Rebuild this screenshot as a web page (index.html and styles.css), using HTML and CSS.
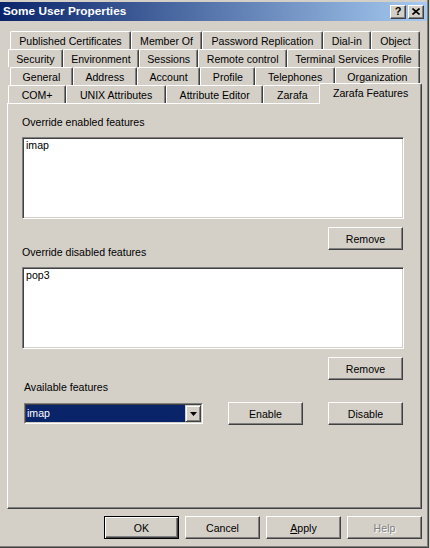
FILE: index.html
```html
<!DOCTYPE html>
<html>
<head>
<meta charset="utf-8">
<link rel="stylesheet" href="styles.css">
</head>
<body>
<div class="window">
  <div class="caption">
    <span class="title">Some User Properties</span>
    <div class="capbtns">
      <span class="capbtn help">?</span>
      <span class="capbtn close"><svg width="8" height="7" viewBox="0 0 8 7"><path d="M0.5 0.5 L7.5 6.5 M7.5 0.5 L0.5 6.5" stroke="#000" stroke-width="1.6" fill="none"/></svg></span>
    </div>
  </div>
  <div class="client">
    <div class="tabs">
      <div class="tabrow indent">
        <div class="tab">Published Certificates</div>
        <div class="tab">Member Of</div>
        <div class="tab">Password Replication</div>
        <div class="tab">Dial-in</div>
        <div class="tab">Object</div>
      </div>
      <div class="tabrow">
        <div class="tab">Security</div>
        <div class="tab">Environment</div>
        <div class="tab">Sessions</div>
        <div class="tab">Remote control</div>
        <div class="tab">Terminal Services Profile</div>
      </div>
      <div class="tabrow indent">
        <div class="tab">General</div>
        <div class="tab">Address</div>
        <div class="tab">Account</div>
        <div class="tab">Profile</div>
        <div class="tab">Telephones</div>
        <div class="tab">Organization</div>
      </div>
      <div class="tabrow">
        <div class="tab">COM+</div>
        <div class="tab">UNIX Attributes</div>
        <div class="tab">Attribute Editor</div>
        <div class="tab">Zarafa</div>
        <div class="tab sel">Zarafa Features</div>
      </div>
    </div>
    <div class="panel">
      <div class="lbl">Override enabled features</div>
      <div class="listbox"><div class="item">imap</div></div>
      <div class="btnrow"><div class="btn">Remove</div></div>
      <div class="lbl lbl-up">Override disabled features</div>
      <div class="listbox"><div class="item">pop3</div></div>
      <div class="btnrow"><div class="btn">Remove</div></div>
      <div class="lbl lbl-avail">Available features</div>
      <div class="comborow">
        <div class="combo">
          <div class="combo-inner">
            <div class="combo-sel">imap</div>
            <div class="combo-drop"><svg width="7" height="4" viewBox="0 0 7 4"><polygon points="0,0 7,0 3.5,4" fill="#000"/></svg></div>
          </div>
        </div>
        <div class="btn">Enable</div>
        <div class="btn btn-gap">Disable</div>
      </div>
    </div>
    <div class="dlgbtns">
      <div class="btn default">OK</div>
      <div class="btn">Cancel</div>
      <div class="btn"><span><u>A</u>pply</span></div>
      <div class="btn disabled">Help</div>
    </div>
  </div>
</div>
</body>
</html>
```
FILE: styles.css
```css
* { box-sizing: border-box; }
html, body { margin: 0; padding: 0; }
body {
  width: 430px;
  height: 548px;
  overflow: hidden;
  background: #d4d0c8;
  font-family: "Liberation Sans", Arial, sans-serif;
  font-size: 10.6px;
  color: #000;
}
.window {
  width: 429px;
  height: 548px;
  background: #d4d0c8;
  border-right: 1px solid #404040;
  border-bottom: 1px solid #404040;
  box-shadow: inset -1px -1px #808080;
  padding-top: 2px;
}
.caption {
  height: 19px;
  margin-right: 1px;
  padding: 0 3px 0 3px;
  display: flex;
  align-items: center;
  justify-content: space-between;
  background: linear-gradient(to right, #0a246a, #a6caf0);
  color: #fff;
  font-weight: bold;
}
.title { line-height: 13px; font-size: 11.8px; }
.capbtns { display: flex; gap: 2px; }
.capbtn {
  width: 16px;
  height: 14px;
  background: #d4d0c8;
  border: 1px solid;
  border-color: #fff #404040 #404040 #fff;
  box-shadow: inset -1px -1px #808080;
  display: flex;
  align-items: center;
  justify-content: center;
  color: #000;
  font-weight: bold;
  font-size: 11px;
  line-height: 11px;
}
.client { padding-left: 7px; }
.tabs { margin-top: 10px; width: 415px; }
.tabrow {
  display: flex;
  height: 18px;
  margin: 0 2px 0 1px;
}
.tabrow.indent { margin-left: 3px; }
.tab {
  flex: 1 1 auto;
  display: flex;
  align-items: center;
  justify-content: center;
  white-space: nowrap;
  padding: 0 4px;
  height: 18px;
  border-top: 1px solid #fff;
  border-left: 1px solid #fff;
  border-right: 1px solid #404040;
  box-shadow: inset -1px 0 #808080;
  border-radius: 2px 2px 0 0;
  background: #d4d0c8;
}
.tab.sel {
  margin: -2px -2px 0 -2px;
  height: 21px;
  align-self: flex-start;
  position: relative;
  z-index: 1;
  padding-bottom: 3px;
}
.panel {
  width: 415px;
  height: 406px;
  border: 1px solid;
  border-color: #fff #404040 #404040 #fff;
  box-shadow: inset -1px -1px #808080;
  padding: 12px 0 0 14px;
  display: flex;
  flex-direction: column;
}
.lbl { height: 13px; line-height: 13px; white-space: nowrap; }
.lbl-up { margin-top: -4px; }
.lbl-avail { margin-top: 1px; margin-left: 2px; }
.listbox {
  width: 382px;
  height: 82px;
  margin-top: 8px;
  background: #fff;
  border: 1px solid;
  border-color: #808080 #fff #fff #808080;
  box-shadow: inset 1px 1px #404040, inset -1px -1px #d4d0c8;
  padding: 1px 3px;
}
.item { line-height: 13px; }
.btnrow {
  width: 382px;
  margin-top: 8px;
  padding-right: 1px;
  display: flex;
  justify-content: flex-end;
}
.btn {
  width: 75px;
  height: 23px;
  flex: none;
  background: #d4d0c8;
  border: 1px solid;
  border-color: #fff #404040 #404040 #fff;
  box-shadow: inset -1px -1px #808080;
  display: flex;
  align-items: center;
  justify-content: center;
  white-space: nowrap;
}
.btn.default {
  border-color: #000;
  box-shadow: inset 1px 1px #fff, inset -1px -1px #404040, inset -2px -2px #808080;
}
.btn.disabled { color: #808080; text-shadow: 1px 1px #fff; }
.comborow {
  margin-top: 8px;
  height: 23px;
  padding-left: 2px;
  display: flex;
  align-items: center;
}
.combo {
  width: 179px;
  height: 21px;
  margin-right: 25px;
  border: 1px solid;
  border-color: #808080 #fff #fff #808080;
  display: flex;
}
.combo-inner {
  flex: 1;
  display: flex;
  background: #fff;
  border: 1px solid;
  border-color: #404040 #d4d0c8 #d4d0c8 #404040;
}
.combo-sel {
  flex: 1;
  background: #0a246a;
  color: #fff;
  padding-left: 1px;
  line-height: 17px;
}
.combo-drop {
  width: 16px;
  background: #d4d0c8;
  border: 1px solid;
  border-color: #d4d0c8 #404040 #404040 #d4d0c8;
  box-shadow: inset 1px 1px #fff, inset -1px -1px #808080;
  display: flex;
  align-items: center;
  justify-content: center;
}
.btn-gap { margin-left: 25px; }
.dlgbtns {
  width: 415px;
  margin-top: 7px;
  display: flex;
  justify-content: flex-end;
  gap: 6px;
}
```
